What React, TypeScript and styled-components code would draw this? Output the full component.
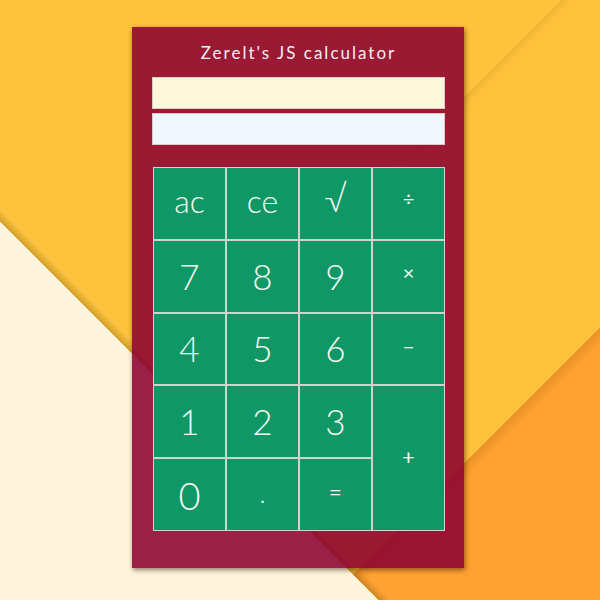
import React from 'react';
import styled, { createGlobalStyle } from 'styled-components';

const GlobalStyle = createGlobalStyle`
  html, body {
    margin: 0;
    padding: 0;
  }
  body {
    width: 600px;
    height: 600px;
    overflow: hidden;
    font-family: 'Lato', 'Liberation Sans', sans-serif;
    background-color: #fec23d;
    background-image:
      linear-gradient(225deg, rgba(0,0,0,0) 572px, rgba(90,60,0,0.28) 581px, #fef5dc 581px),
      linear-gradient(135deg, rgba(0,0,0,0) 656px, #ec9128 656px, #fea233 668px),
      linear-gradient(135deg, rgba(0,0,0,0) 397px, rgba(120,80,0,0.12) 397px, rgba(0,0,0,0) 406px);
  }
`;

const Page = styled.div`
  display: flex;
  justify-content: center;
  padding-top: 27px;
  padding-right: 4px;
`;

const Calculator = styled.div`
  width: 332px;
  height: 541px;
  box-sizing: border-box;
  padding: 16px 19px 0 20px;
  background: rgba(139, 0, 49, 0.87);
  box-shadow: 1px 2px 5px rgba(60, 20, 0, 0.55);
  display: flex;
  flex-direction: column;
`;

const Title = styled.h1`
  margin: 0 0 14px;
  font-size: 17px;
  line-height: 20px;
  font-weight: 400;
  letter-spacing: 2px;
  color: #f6eef0;
  text-align: center;
`;

const Screen = styled.div<{ $tone: string }>`
  height: 32px;
  box-sizing: border-box;
  border: 1px solid #dcc9cd;
  background: ${(p) => p.$tone};
  margin-bottom: 4px;
`;

const Keypad = styled.div`
  margin: 18px 0 0 1px;
  width: 292px;
  display: grid;
  grid-template-columns: repeat(4, 1fr);
  grid-template-rows: repeat(5, 1fr);
  height: 364px;
  gap: 2px;
  padding: 1px;
  box-sizing: border-box;
  background: #d2d2d2;
`;

const Key = styled.button<{ $size: number; $tall?: boolean; $lift?: number; $op?: boolean }>`
  border: none;
  margin: 0;
  padding: 0 0 ${(p) => p.$lift ?? 0}px;
  background: #0f9865;
  color: #f6faf6;
  font-family: 'Lato', 'Liberation Sans', sans-serif;
  font-weight: ${(p) => (p.$op ? 400 : 300)};
  font-size: ${(p) => p.$size}px;
  line-height: 1;
  display: flex;
  align-items: center;
  justify-content: center;
  grid-row: ${(p) => (p.$tall ? 'span 2' : 'auto')};
  cursor: pointer;
`;

const keys: { label: string; size: number; lift?: number; op?: boolean }[] = [
  { label: 'ac', size: 32, lift: 4 },
  { label: 'ce', size: 32, lift: 4 },
  { label: '√', size: 36, lift: 10 },
  { label: '÷', size: 20, lift: 10, op: true },
  { label: '7', size: 35 },
  { label: '8', size: 35 },
  { label: '9', size: 35 },
  { label: '×', size: 20, lift: 8, op: true },
  { label: '4', size: 35 },
  { label: '5', size: 35 },
  { label: '6', size: 35 },
  { label: '−', size: 20, lift: 6, op: true },
  { label: '1', size: 35 },
  { label: '2', size: 35 },
  { label: '3', size: 35 },
  { label: '+', size: 22, lift: 2, op: true },
  { label: '0', size: 38 },
  { label: '.', size: 26, lift: 4 },
  { label: '=', size: 22, lift: 6, op: true },
];

const App = () => {
  return (
    <Page>
      <GlobalStyle />
      <Calculator>
        <Title>Zerelt's JS calculator</Title>
        <Screen $tone="#fff7dc" />
        <Screen $tone="#f0f7fe" />
        <Keypad>
          {keys.map((k) => (
            <Key
              key={k.label}
              $size={k.size}
              $tall={k.label === '+'}
              $lift={k.lift}
              $op={k.op}
            >
              {k.label}
            </Key>
          ))}
        </Keypad>
      </Calculator>
    </Page>
  );
};

export default App;
